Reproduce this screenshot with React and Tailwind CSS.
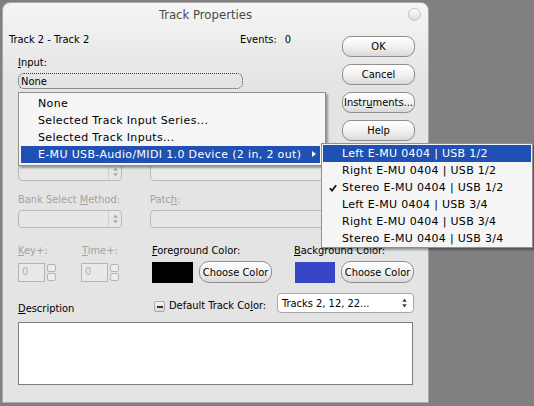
import React from "react";

function Pill({ children, className = "" }) {
  return (
    <div
      className={
        "flex items-center justify-center h-[21px] w-[73px] rounded-[9px] border border-[#8e8e8e] bg-linear-to-b from-[#ffffff] via-[#f2f2f2] to-[#d9d9d9] shadow-[inset_0_1px_0_#ffffff] leading-none text-black " +
        className
      }
    >
      {children}
    </div>
  );
}

function UpDown({ color = "#555" }) {
  return (
    <svg width="5" height="10" viewBox="0 0 5 10">
      <path d="M2.5 0.5 L4.8 3.8 L0.2 3.8 Z" fill={color} />
      <path d="M2.5 9.5 L4.8 6.2 L0.2 6.2 Z" fill={color} />
    </svg>
  );
}

function DisabledCombo() {
  return (
    <div className="w-[104px] h-[18px] rounded-[4px] border border-[#b9b9b9] bg-[#e7e7e7] flex items-center justify-end">
      <div className="h-full w-[13px] border-l border-[#d0d0d0] flex items-center justify-center">
        <UpDown color="#a8a8a8" />
      </div>
    </div>
  );
}

function SpinBox() {
  return (
    <div className="flex items-center">
      <div className="w-[27px] h-[19px] border border-[#b4b4b4] bg-[#e9e9e9] flex items-center pl-[3px] text-[#b0b0b0]">
        0
      </div>
      <div className="ml-[2px] flex flex-col gap-[1px]">
        <div className="w-[9px] h-[8px] border border-[#b4b4b4] rounded-[2px] bg-[#ececec]" />
        <div className="w-[9px] h-[8px] border border-[#b4b4b4] rounded-[2px] bg-[#ececec]" />
      </div>
    </div>
  );
}

function Check() {
  return (
    <svg width="8" height="8" viewBox="0 0 8 8">
      <path d="M0.8 4.2 L3 6.6 L7.2 1.2" stroke="#111" strokeWidth="1.7" fill="none" />
    </svg>
  );
}

export default function App() {
  const sub = [
    "Left E-MU 0404 | USB 1/2",
    "Right E-MU 0404 | USB 1/2",
    "Stereo E-MU 0404 | USB 1/2",
    "Left E-MU 0404 | USB 3/4",
    "Right E-MU 0404 | USB 3/4",
    "Stereo E-MU 0404 | USB 3/4",
  ];
  return (
    <div className="relative w-[534px] h-[406px] bg-[#808080] pt-[2px] pl-[2px] overflow-hidden font-['DejaVu_Sans_Condensed','Liberation_Sans',sans-serif] text-[11px] text-black">
      <div className="w-[427px] h-[401px] rounded-t-[8px] border border-[#a9a9a9] bg-linear-to-b from-[#f5f5f5] to-[#e4e4e4] to-20% flex flex-col">
        {/* Title bar */}
        <div className="h-[22px] flex items-center">
          <div className="flex-1 text-center text-[13px] text-[#4a4a4a] leading-none">
            Track Properties
          </div>
          <div className="w-[13px] h-[13px] rounded-full border border-[#c2c2c2] bg-linear-to-b from-[#ffffff] to-[#dedede] mr-[7px]" />
        </div>

        {/* Section A */}
        <div className="h-[138px] flex">
          <div className="w-[329px] flex flex-col">
            <div className="mt-[8px] h-[13px] leading-[13px] flex pl-[6px]">
              <span className="w-[231px]">Track 2 - Track 2</span>
              <span>Events:</span>
              <span className="ml-[8px]">0</span>
            </div>
            <div className="mt-[10px] h-[13px] leading-[13px] pl-[15px]">
              <span className="underline">I</span>nput:
            </div>
            <div className="mt-[4px] ml-[15px] w-[225px] h-[16px] rounded-[6px] border border-dotted border-[#3a3a3a] flex items-center pl-[2px] leading-none">
              None
            </div>
          </div>
          <div className="ml-[10px] mt-[11px] flex flex-col gap-[7px]">
            <Pill>OK</Pill>
            <Pill>Cancel</Pill>
            <Pill>
              Instr<span className="underline">u</span>ments...
            </Pill>
            <Pill>Help</Pill>
          </div>
        </div>

        {/* Row B */}
        <div className="flex pl-[15px] h-[18px]">
          <DisabledCombo />
          <div className="ml-[28px] w-[263px] h-[18px] rounded-[4px] border border-[#b9b9b9] bg-[#e9ebe9]" />
        </div>

        {/* Row C */}
        <div className="mt-[12px] flex pl-[15px] h-[13px] leading-[13px] text-[#a2a2a2]">
          <span className="w-[132px]">
            Bank Select <span className="underline">M</span>ethod:
          </span>
          <span>
            Patc<span className="underline">h</span>:
          </span>
        </div>

        {/* Row D */}
        <div className="mt-[4px] flex pl-[15px] h-[18px]">
          <DisabledCombo />
          <div className="ml-[28px] w-[263px] h-[18px] rounded-[4px] border border-[#b9b9b9] bg-[#e7e7e7]" />
        </div>

        {/* Row E */}
        <div className="mt-[16px] flex pl-[15px] h-[13px] leading-[13px]">
          <span className="w-[64px] text-[#a2a2a2]">
            <span className="underline">K</span>ey+:
          </span>
          <span className="w-[70px] text-[#a2a2a2]">
            <span className="underline">T</span>ime+:
          </span>
          <span className="w-[142px]">
            <span className="underline">F</span>oreground Color:
          </span>
          <span>
            <span className="underline">B</span>ackground Color:
          </span>
        </div>

        {/* Row F */}
        <div className="mt-[4px] flex items-center pl-[15px] h-[22px]">
          <SpinBox />
          <div className="ml-[25px]">
            <SpinBox />
          </div>
          <div className="ml-[33px] w-[41px] h-[21px] bg-black" />
          <Pill className="ml-[6px] h-[22px] rounded-[10px]">Choose Color</Pill>
          <div className="ml-[23px] w-[40px] h-[21px] bg-[#3545c6]" />
          <Pill className="ml-[6px] h-[22px] rounded-[10px]">Choose Color</Pill>
        </div>

        {/* Row G */}
        <div className="mt-[10px] flex items-center pl-[15px] h-[20px]">
          <span className="w-[136px] self-end leading-[13px] mb-[-2px]">
            <span className="underline">D</span>escription
          </span>
          <div className="self-end mb-[1px] w-[11px] h-[11px] rounded-[2px] border border-[#a8a8a8] bg-linear-to-b from-[#f4f4f4] to-[#d8d8d8] flex items-center justify-center">
            <div className="w-[6px] h-[2px] bg-[#333]" />
          </div>
          <span className="ml-[4px] w-[108px] self-end leading-[13px] mb-[1px]">
            Default Track Co<span className="underline">l</span>or:
          </span>
          <div className="w-[137px] h-[20px] rounded-[4px] border border-[#a6a6a6] bg-white flex items-center justify-between pl-[4px] pr-[6px] self-start">
            <span className="leading-none">Tracks 2, 12, 22...</span>
            <UpDown color="#444" />
          </div>
        </div>

        {/* Description box */}
        <div className="mt-[9px] ml-[15px] w-[395px] h-[63px] border border-[#7c7c7c] bg-white" />
      </div>

      {/* Dropdown menu */}
      <div className="absolute left-[18px] top-[92px] w-[308px] h-[74px] border border-[#8f8f8f] bg-[#f5f5f5] shadow-[2px_2px_2px_rgba(0,0,0,0.35)] p-[2px] pr-[5px] font-['DejaVu_Sans',sans-serif] text-[11px] tracking-[0.35px]">
        <div className="h-[17px] flex items-center pl-[17px] pt-[2px]">None</div>
        <div className="h-[17px] flex items-center pl-[17px] pt-[2px]">Selected Track Input Series...</div>
        <div className="h-[17px] flex items-center pl-[17px] pt-[2px]">Selected Track Inputs...</div>
        <div className="relative h-[17px] flex items-center pl-[17px] pt-[2px] bg-[#1f50b4] text-white">
          E-MU USB-Audio/MIDI 1.0 Device (2 in, 2 out)
          <div className="absolute right-[4px] top-[5px] w-0 h-0 border-y-[3.5px] border-y-transparent border-l-[4px] border-l-white" />
        </div>
      </div>

      {/* Submenu */}
      <div className="absolute left-[321px] top-[143px] w-[212px] h-[105px] border border-[#8f8f8f] bg-[#f5f5f5] shadow-[2px_2px_2px_rgba(0,0,0,0.35)] p-[1px] font-['DejaVu_Sans',sans-serif] text-[11px] tracking-[0.3px]">
        {sub.map((s, i) => (
          <div
            key={i}
            className={
              "relative h-[17px] flex items-center pl-[19px] pt-[2px] " +
              (i === 0 ? "bg-[#1f50b4] text-white" : "")
            }
          >
            {i === 2 && (
              <div className="absolute left-[6px] top-[5px]">
                <Check />
              </div>
            )}
            {s}
          </div>
        ))}
      </div>
    </div>
  );
}
